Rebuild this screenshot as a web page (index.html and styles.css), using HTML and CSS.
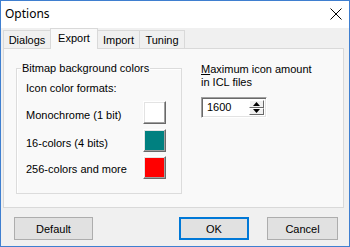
FILE: index.html
```html
<!DOCTYPE html>
<html>
<head>
<meta charset="utf-8">
<link rel="stylesheet" href="styles.css">
</head>
<body>
<div class="window">
  <div class="titlebar">
    <span class="title">Options</span>
    <svg class="close" width="12" height="12" viewBox="0 0 12 12"><path d="M0.5 0.5 L11.5 11.5 M11.5 0.5 L0.5 11.5" stroke="#000" stroke-width="1" fill="none"/></svg>
  </div>
  <div class="client">
    <div class="tabstrip">
      <div class="tab t-dialogs">Dialogs</div>
      <div class="tab t-export active">Export</div>
      <div class="tab t-import">Import</div>
      <div class="tab t-tuning">Tuning</div>
    </div>
    <div class="panel">
      <div class="group">
        <div class="legend">Bitmap background colors</div>
        <div class="formats">Icon color formats:</div>
        <div class="row r1"><span>Monochrome (1 bit)</span><span class="swatch sw-white"></span></div>
        <div class="row r2"><span>16-colors (4 bits)</span><span class="swatch sw-teal"></span></div>
        <div class="row r3"><span>256-colors and more</span><span class="swatch sw-red"></span></div>
      </div>
      <div class="right">
        <div class="maxlabel"><u>M</u>aximum icon amount<br>in ICL files</div>
        <div class="spin">
          <span class="spinval">1600</span>
          <span class="spinbtns">
            <span class="sb up"><svg width="7" height="4" viewBox="0 0 7 4"><path d="M3.5 0 L7 4 L0 4 Z" fill="#000"/></svg></span>
            <span class="sb down"><svg width="7" height="4" viewBox="0 0 7 4"><path d="M0 0 L7 0 L3.5 4 Z" fill="#000"/></svg></span>
          </span>
        </div>
      </div>
    </div>
    <div class="buttons">
      <button class="btn b-default">Default</button>
      <span class="spacer"></span>
      <button class="btn b-ok">OK</button>
      <button class="btn b-cancel">Cancel</button>
    </div>
  </div>
</div>
</body>
</html>
```

FILE: styles.css
```css
html, body {
  margin: 0;
  padding: 0;
  background: #f0f0f0;
}
.window {
  width: 350px;
  height: 247px;
  box-sizing: border-box;
  border: 1px solid #3f7fd0;
  background: #f0f0f0;
  display: flex;
  flex-direction: column;
  font-family: "Liberation Sans", Arial, sans-serif;
  font-size: 11px;
  color: #000;
}
.titlebar {
  height: 27px;
  background: #fff;
  display: flex;
  align-items: center;
  justify-content: space-between;
  padding: 0 7px 0 4px;
  flex: none;
}
.title {
  font-family: "Noto Sans", sans-serif;
  font-size: 12px;
  margin-top: -2px;
}
.close {
  margin-top: -1px;
}
.client {
  flex: 1;
  display: flex;
  flex-direction: column;
  padding: 0 5px 0 2px;
}
.tabstrip {
  height: 20px;
  display: flex;
  align-items: flex-end;
  position: relative;
  z-index: 2;
}
.tab {
  height: 18px;
  box-sizing: border-box;
  border: 1px solid #d9d9d9;
  border-bottom: none;
  background: #f0f0f0;
  display: flex;
  align-items: center;
  justify-content: center;
  margin-left: -1px;
  padding-top: 1px;
}
.t-dialogs { width: 48px; margin-left: 0; }
.t-export { width: 48px; }
.t-import { width: 43px; }
.t-tuning { width: 46px; }
.tab.active {
  height: 21px;
  margin-bottom: -1px;
  background: #f9f9f9;
  padding-top: 0;
  padding-bottom: 3px;
}
.panel {
  height: 160px;
  box-sizing: border-box;
  border: 1px solid #d9d9d9;
  background: #f9f9f9;
  display: flex;
  align-items: flex-start;
  padding: 14px 0 0 12px;
}
.group {
  margin-top: 5px;
  width: 166px;
  height: 126px;
  box-sizing: border-box;
  border: 1px solid #dcdcdc;
  box-shadow: 1px 1px 0 #fff inset;
  position: relative;
  padding: 10px 15px 0 9px;
}
.legend {
  position: absolute;
  left: 4px;
  top: -7px;
  padding: 0 1px;
  background: #f9f9f9;
  line-height: 13px;
}
.formats {
  line-height: 13px;
  margin-top: 3px;
}
.row {
  display: flex;
  align-items: center;
  justify-content: space-between;
  height: 23px;
}
.row span:first-child {
  margin-top: 5px;
}
.r1 { margin-top: 6px; }
.r2 { margin-top: 5px; }
.r3 { margin-top: 4px; }
.r3 span:first-child { margin-top: 2px; }
.swatch {
  width: 23px;
  height: 23px;
  box-sizing: border-box;
  border: 1px solid;
  border-color: #fff #696969 #696969 #fff;
  box-shadow: inset -1px -1px 0 #a0a0a0, inset 1px 1px 0 #e3e3e3;
}
.sw-white { background: #fff; }
.sw-teal { background: #008080; }
.sw-red { background: #ff0000; }
.right {
  margin-left: 19px;
  padding-top: 0;
}
.maxlabel {
  line-height: 13px;
}
.spin {
  margin-top: 8px;
  width: 66px;
  height: 21px;
  box-sizing: border-box;
  border: 1px solid;
  border-color: #a0a0a0 #fff #fff #a0a0a0;
  box-shadow: inset 1px 1px 0 #696969, inset -1px -1px 0 #e3e3e3;
  background: #fff;
  display: flex;
  align-items: center;
  justify-content: space-between;
  padding: 2px 2px 2px 5px;
}
.spinval {
  line-height: 13px;
}
.spinbtns {
  display: flex;
  flex-direction: column;
  width: 15px;
  height: 15px;
}
.sb {
  flex: 1;
  display: flex;
  align-items: center;
  justify-content: center;
  background: #f0f0f0;
  border: 1px solid;
  border-color: #fff #696969 #696969 #fff;
}
.buttons {
  display: flex;
  align-items: center;
  padding: 9px 0 0 11px;
}
.spacer { flex: 1; }
.btn {
  height: 23px;
  box-sizing: border-box;
  background: #e1e1e1;
  border: 1px solid #adadad;
  font-family: "Liberation Sans", Arial, sans-serif;
  font-size: 11px;
  color: #000;
  padding: 0;
  margin: 0;
}
.b-default { width: 79px; }
.b-ok {
  width: 70px;
  border-color: #0078d7;
  box-shadow: inset 0 0 0 1px #0078d7;
}
.b-cancel { width: 71px; margin-left: 18px; margin-right: 6px; }
```
